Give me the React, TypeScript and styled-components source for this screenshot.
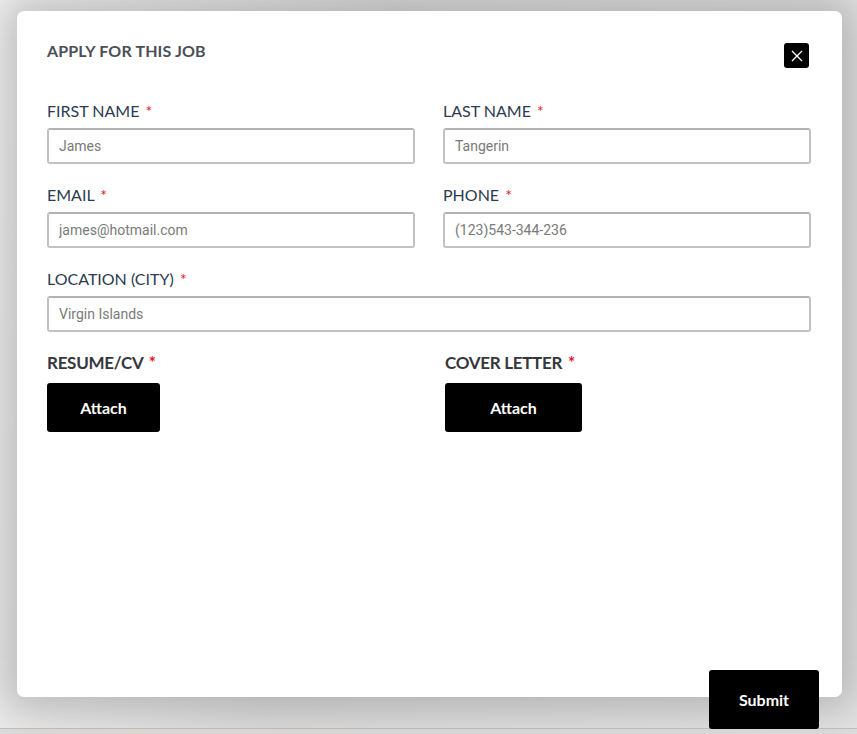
import styled, { createGlobalStyle } from 'styled-components';

const GlobalStyle = createGlobalStyle`
  html, body {
    margin: 0;
    padding: 0;
    background: #ececec;
  }
  * {
    box-sizing: border-box;
  }
`;

const FIELDS = [
  { label: 'FIRST NAME', value: 'James' },
  { label: 'LAST NAME', value: 'Tangerin' },
  { label: 'EMAIL', value: 'james@hotmail.com' },
  { label: 'PHONE', value: '(123)543-344-236' },
  { label: 'LOCATION (CITY)', value: 'Virgin Islands', wide: true },
];

const ATTACHMENTS = [
  { label: 'RESUME/CV', width: 113 },
  { label: 'COVER LETTER', width: 137 },
];

const App = () => {
  return (
    <S.Page>
      <GlobalStyle />
      <S.Backdrop>
        <S.Card>
          <S.Header>
            <S.Title>APPLY FOR THIS JOB</S.Title>
            <S.Close aria-label="close">
              <svg width="12" height="12" viewBox="0 0 12 12">
                <path d="M1 1 L11 11 M11 1 L1 11" stroke="#fff" strokeWidth="1.4" />
              </svg>
            </S.Close>
          </S.Header>

          <S.Grid>
            {FIELDS.map((f) => (
              <S.Field key={f.label} $wide={f.wide}>
                <S.Label>
                  {f.label} <S.Star>*</S.Star>
                </S.Label>
                <S.Input placeholder={f.value} />
              </S.Field>
            ))}
          </S.Grid>

          <S.AttachRow>
            {ATTACHMENTS.map((a) => (
              <S.Field key={a.label} $gap={9}>
                <S.FileLabel>
                  {a.label} <S.Star>*</S.Star>
                </S.FileLabel>
                <S.BlackButton $w={a.width} $h={49}>
                  Attach
                </S.BlackButton>
              </S.Field>
            ))}
          </S.AttachRow>

          <S.SubmitSlot>
            <S.BlackButton $w={110} $h={59}>
              Submit
            </S.BlackButton>
          </S.SubmitSlot>
        </S.Card>
      </S.Backdrop>
      <S.BottomStrip />
    </S.Page>
  );
};
export default App;

const S = {
  Page: styled.div`
    width: 857px;
    height: 734px;
    display: flex;
    flex-direction: column;
    overflow: hidden;
    background: linear-gradient(100deg, #f2f2f2 0%, #dcdcdc 40%, #e4e4e4 100%);
  `,
  Backdrop: styled.div`
    flex: 1;
    padding: 11px 15px 0 17px;
    border-bottom: 1px solid #c2c2c2;
  `,
  Card: styled.div`
    position: relative;
    width: 825px;
    height: 686px;
    background: #fff;
    border-radius: 7px;
    padding: 30px 31px 0 30px;
    box-shadow: 0 0 40px 14px rgba(0, 0, 0, 0.2);
  `,
  Header: styled.div`
    display: flex;
    justify-content: space-between;
    align-items: flex-start;
    height: 59px;
  `,
  Title: styled.div`
    font-family: Lato, 'Noto Sans', sans-serif;
    font-size: 16px;
    font-weight: 700;
    line-height: 20px;
    color: #4b4f57;
    letter-spacing: 0.15px;
  `,
  Close: styled.button`
    width: 25px;
    height: 25px;
    margin-top: 2px;
    margin-right: 2px;
    padding: 0;
    border: none;
    border-radius: 3px;
    background: #000;
    display: flex;
    align-items: center;
    justify-content: center;
  `,
  Grid: styled.div`
    display: grid;
    grid-template-columns: 368px 368px;
    column-gap: 28px;
    row-gap: 20px;
  `,
  Field: styled.div<{ $wide?: boolean; $gap?: number }>`
    display: flex;
    flex-direction: column;
    align-items: flex-start;
    gap: ${(p) => p.$gap ?? 6}px;
    grid-column: ${(p) => (p.$wide ? '1 / span 2' : 'auto')};
  `,
  Label: styled.div`
    font-family: Lato, 'Noto Sans', sans-serif;
    font-size: 16px;
    font-weight: 400;
    line-height: 22px;
    color: #2b3b51;
  `,
  Star: styled.span`
    color: #e8161c;
    margin-left: 2px;
  `,
  Input: styled.input`
    width: 100%;
    height: 36px;
    border: 2px solid #c2c2c6;
    border-top-color: #b3b3b3;
    border-radius: 3px;
    padding: 0 10px;
    font-family: Roboto, 'Liberation Sans', sans-serif;
    font-size: 14px;
    color: #333;
    outline: none;
    &::placeholder {
      color: #7a7a7a;
    }
  `,
  AttachRow: styled.div`
    display: grid;
    grid-template-columns: 398px 1fr;
    margin-top: 20px;
  `,
  FileLabel: styled.div`
    font-family: Lato, 'Noto Sans', sans-serif;
    font-size: 17px;
    font-weight: 700;
    line-height: 22px;
    color: #35373c;
    letter-spacing: -0.3px;
  `,
  BlackButton: styled.button<{ $w: number; $h: number }>`
    width: ${(p) => p.$w}px;
    height: ${(p) => p.$h}px;
    border: none;
    border-radius: 3px;
    background: #000;
    color: #fff;
    font-family: Lato, 'Noto Sans', sans-serif;
    font-size: 16px;
    font-weight: 700;
    padding: 0;
  `,
  SubmitSlot: styled.div`
    position: absolute;
    right: 23px;
    bottom: -32px;
  `,
  BottomStrip: styled.div`
    height: 5px;
    background: linear-gradient(90deg, #dedede 0%, #e2dcd7 15%, #dcdcdc 45%, #dedede 100%);
  `,
};
